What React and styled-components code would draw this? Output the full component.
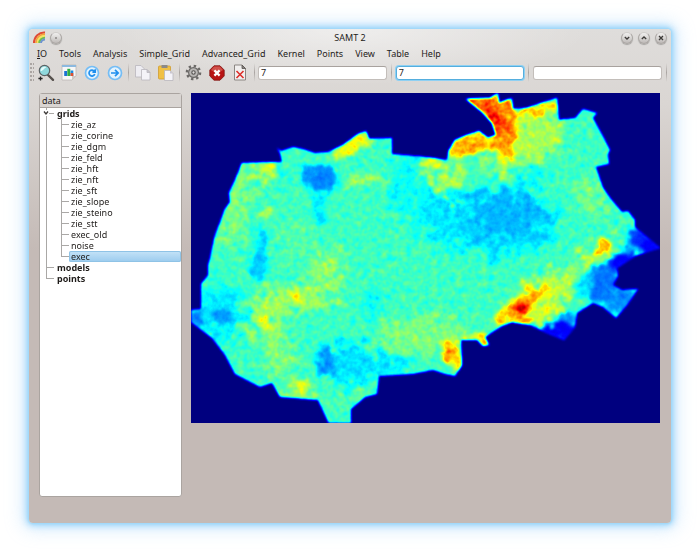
import React, { useState } from "react";
import styled, { createGlobalStyle, css } from "styled-components";

const GlobalStyle = createGlobalStyle`
  * { box-sizing: border-box; }
  body {
    margin: 0;
    background: #fff;
    color: #1f1c1a;
    font: 9px/12px "Noto Sans", "Open Sans", sans-serif;
  }
  button, input { font: inherit; color: inherit; }
`;

const Desktop = styled.div`
  display: flex;
  min-height: 100vh;
  padding: 29px;
`;

const Window = styled.div`
  flex: 1;
  min-width: 0;
  display: flex;
  flex-direction: column;
  border-radius: 4px;
  background:
    radial-gradient(ellipse 240px 56px at 50% 0, rgba(255, 255, 255, 0.5), rgba(255, 255, 255, 0)),
    linear-gradient(#dfdddb 0, #dad6d3 74px, #c4bab6 222px);
  box-shadow:
    0 0 2px 1px #a0d8f8,
    0 0 7px 2px rgba(120, 200, 250, 0.8),
    0 0 18px 6px rgba(150, 205, 250, 0.4);
`;

const TitleBar = styled.header`
  display: grid;
  grid-template-columns: 1fr auto 1fr;
  align-items: center;
  height: 17px;
  padding: 0 4px;
`;

const TitleGroup = styled.div`
  display: flex;
  align-items: center;
  gap: ${(p) => (p.$end ? 5 : 4)}px;
  justify-content: ${(p) => (p.$end ? "flex-end" : "flex-start")};
`;

const Title = styled.h1`
  margin: 0;
  font-size: 9px;
  font-weight: 400;
`;

const RoundButton = styled.button`
  display: grid;
  place-items: center;
  width: 12px;
  height: 12px;
  padding: 0;
  border: 1px solid #aaa6a3;
  border-top-color: #d0cdcb;
  border-radius: 50%;
  background: linear-gradient(#f1f0ef, #bebab8);
  box-shadow: 0 1px 1px rgba(0, 0, 0, 0.25);
`;

const MenuBar = styled.nav`
  display: flex;
  gap: 12px;
  height: 16px;
  padding: 0 8px;
`;

const MenuItem = styled.button`
  padding: 0;
  border: 0;
  background: none;
  line-height: 16px;
  white-space: nowrap;
`;

const ToolBar = styled.div`
  display: flex;
  align-items: center;
  height: 21px;
`;

const Grip = styled.span`
  width: 4px;
  height: 19px;
  margin: 0 0 0 1px;
  background: radial-gradient(circle at 1px 1px, #aaa5a2 1px, transparent 1px) 0 0 / 3px 4px;
`;

const ToolButton = styled.button`
  display: grid;
  place-items: center;
  width: 23px;
  height: 20px;
  padding: 0;
  border: 0;
  background: none;
  svg { display: block; }
`;

const Separator = styled.span`
  flex: none;
  width: 1px;
  height: 19px;
  margin: 0 ${(p) => p.$gap || 2}px;
  background: linear-gradient(transparent, #aaa5a2, transparent);
`;

const Field = styled.input`
  flex: 1;
  min-width: 0;
  height: 14px;
  padding: 0 2px;
  border: 1px solid #c3beba;
  border-top-color: #a8a29e;
  border-radius: 3px;
  background: #fff;
  outline: none;
  ${(p) =>
    p.$active &&
    css`
      border-color: #55aede;
      box-shadow: 0 0 0 1px #8fd0f2;
    `}
`;

const Workspace = styled.main`
  display: grid;
  grid-template-columns: 143px minmax(0, 1fr);
  gap: 9px;
  flex: 1;
  padding: 10px 11px 26px 10px;
`;

const DataPanel = styled.section`
  border: 1px solid #aaa4a0;
  border-radius: 3px;
  background: #fff;
`;

const PanelHeader = styled.h2`
  margin: 0;
  height: 14px;
  padding: 0 2px;
  border-bottom: 1px solid #aaa4a0;
  background: #d9d5d2;
  font-size: 9px;
  font-weight: 400;
  line-height: 13px;
`;

const Tree = styled.ul`
  list-style: none;
  margin: 0;
  padding: 0;
`;

const Branch = styled.li`
  display: grid;
  grid-template-columns: ${(p) => (p.$leaf ? 14 : 15)}px minmax(0, 1fr);
`;

const line = "#aaa8a6";

const Guide = styled.span`
  display: grid;
  place-items: center start;
  padding-left: 3px;
  background:
    linear-gradient(${line}, ${line}) 6px 0 / 1px ${(p) => (p.$last ? "6px" : "100%")} no-repeat,
    linear-gradient(${line}, ${line}) 6px 5px / 8px 1px no-repeat;
  svg { background: #fff; align-self: start; margin-top: 2px; }
`;

const Label = styled.button`
  display: block;
  width: 100%;
  height: 11px;
  padding: 0 2px;
  border: 0;
  border-radius: 2px;
  background: none;
  font-weight: ${(p) => (p.$leaf ? 400 : 700)};
  line-height: 11px;
  text-align: left;
  ${(p) =>
    p.$selected &&
    css`
      background: linear-gradient(#c5e3f7, #9acbee);
      box-shadow: inset 0 0 0 1px #8fc3e6;
    `}
`;

const Canvas = styled.svg`
  display: block;
  width: 100%;
  height: auto;
`;

/* ---------- icons ---------- */

const Rainbow = () => (
  <svg width="13" height="13" viewBox="0 0 13 13" fill="none" strokeWidth="2">
    <path d="M1 12C1 6 6 1 12 1.5" stroke="#df4a35" />
    <path d="M3 12C3 7 7 3 12 3.2" stroke="#f4a13c" />
    <path d="M4.7 12C4.7 8 8 5 12 5" stroke="#f4e45c" />
    <path d="M6.3 12C6.3 9 9 6.7 12 6.7" stroke="#6fbd53" />
    <path d="M8 12C8 10 10 8.5 12 8.5" stroke="#6c93cf" />
  </svg>
);

const Glyph = ({ d }) => (
  <svg width="6" height="6" viewBox="0 0 6 6" fill="none" stroke="#3d3a38" strokeWidth="1.3">
    <path d={d} />
  </svg>
);

const SearchIcon = () => (
  <svg width="18" height="18" viewBox="0 0 18 18">
    <path d="M10.5 10.5L16 15.8" stroke="#55504c" strokeWidth="2.4" strokeLinecap="round" />
    <circle cx="7.5" cy="6.5" r="5.2" fill="#8fd8dc" stroke="#5b6264" strokeWidth="1.2" />
    <path d="M3.6 7C3.6 3.5 6.4 2.2 9.4 3.2C7 4 6.4 7 3.6 7Z" fill="#e4fbfb" />
    <path d="M3.5 12.4V16.6M1.4 14.5H5.6" stroke="#222" strokeWidth="1.3" />
  </svg>
);

const ChartIcon = () => (
  <svg width="16" height="17" viewBox="0 0 16 17">
    <path d="M1 1H15V12L11 16H1Z" fill="#f7f7f7" stroke="#bbb7b4" strokeWidth=".8" />
    <path d="M1 1H15V3H1Z" fill="#8cb9df" />
    <path d="M11 16V12H15Z" fill="#cfcac6" />
    <path d="M3.2 7H6V12H3.2Z" fill="#1a72d4" />
    <path d="M6.3 4.8H9.3V12H6.3Z" fill="#2fae45" />
    <path d="M9.6 6.5H12.3V12H9.6Z" fill="#1a8be0" />
    <path d="M9.6 9H12.3V12H9.6Z" fill="#df5130" />
  </svg>
);

const BlueDisc = ({ children }) => (
  <svg width="16" height="16" viewBox="0 0 16 16" fill="none">
    <circle cx="8" cy="8" r="6.5" fill="#e3f3fe" stroke="#74bdf5" strokeWidth="1.7" />
    <g stroke="#1f8fee" strokeWidth="1.7">{children}</g>
  </svg>
);

const CopyIcon = () => (
  <svg width="18" height="18" viewBox="0 0 18 18" stroke="#b9b6bd" strokeWidth=".8">
    <path d="M1.5 1.5H7L10 4.5V13H1.5Z" fill="#eeedf2" />
    <path d="M7.5 5.5H13L16 8.5V16H7.5Z" fill="#f4f3f8" />
    <path d="M13 5.5V8.5H16Z" fill="#c9c6d0" />
  </svg>
);

const PasteIcon = () => (
  <svg width="18" height="18" viewBox="0 0 18 18">
    <rect x="1.5" y="2" width="12" height="13" rx="1" fill="#f0c044" stroke="#cf9c30" strokeWidth=".8" />
    <path d="M4.5 4V1H10.5V4Z" fill="#8d8a87" />
    <path d="M7.5 6.5H13L16 9.5V16.5H7.5Z" fill="#f4f3f8" stroke="#b9b6bd" strokeWidth=".8" />
    <path d="M13 6.5V9.5H16Z" fill="#c9c6d0" />
  </svg>
);

const GearIcon = () => (
  <svg width="17" height="17" viewBox="0 0 17 17" fill="none">
    <circle cx="8.5" cy="8.5" r="6.6" stroke="#6b6967" strokeWidth="2.4" strokeDasharray="2.4 2.784" />
    <circle cx="8.5" cy="8.5" r="4.9" fill="#b9b7b5" stroke="#6b6967" strokeWidth="1.2" />
    <circle cx="8.5" cy="8.5" r="1.7" fill="#dedcda" stroke="#555351" strokeWidth="1.1" />
  </svg>
);

const StopIcon = () => (
  <svg width="16" height="16" viewBox="0 0 16 16">
    <path d="M5 .8H11L15.2 5V11L11 15.2H5L.8 11V5Z" fill="#b81414" stroke="#7d1512" strokeWidth=".8" />
    <path d="M5.2 1.5H10.8L14 5C11 7.5 5 7.5 2 5Z" fill="#d0504a" />
    <path d="M5.4 5.4L10.6 10.6M10.6 5.4L5.4 10.6" stroke="#fff" strokeWidth="2.2" />
  </svg>
);

const PageCrossIcon = () => (
  <svg width="14" height="17" viewBox="0 0 14 17" fill="none">
    <path d="M1.5 1H9L12.5 4.5V16H1.5Z" fill="#f1efee" stroke="#8b8682" />
    <path d="M9 1V4.5H12.5Z" fill="#8b8682" stroke="#57524e" strokeWidth=".8" />
    <path d="M3.5 7L10.5 14M10.5 7L3.5 14" stroke="#dd2f2a" strokeWidth="1.6" />
  </svg>
);

/* ---------- grid map ---------- */

const outline =
  "210,258 215,235 225,209 230,202 229,193 235,180 242,163 282,162 280,153 277,148 281,151 293,147 303,149 315,153 328,152 343,145 358,134 366,131 369,139 392,138 392,154 425,157 447,160 449,150 455,140 467,135 479,131 488,138 496,135 492,123 482,112 466,99 490,98 498,93 499,103 506,100 512,98 513,109 527,108 544,102 557,98 559,120 575,118 583,109 597,113 593,118 605,140 610,150 608,154 609,164 596,167 603,188 611,199 622,212 628,211 635,220 635,227 660,248 650,251 635,256 617,268 618,276 613,285 622,290 638,289 627,305 616,318 603,307 593,303 577,313 575,327 564,340 547,333 530,325 512,322 502,326 485,337 489,345 483,346 477,340 461,340 462,365 455,376 445,374 433,370 412,374 379,376 377,394 365,397 351,409 351,424 329,424 318,400 295,398 280,397 272,383 260,387 235,374 225,355 212,338 191,322 191,310 201,309 201,284 208,275 208,265";

// [cx, cy, rx, ry, level 0..100, rotation]
const broad = [
  [222, 312, 26, 28, 36],
  [236, 205, 14, 46, 50, 12],
  [256, 172, 20, 10, 54],
  [300, 240, 22, 26, 46],
  [412, 190, 24, 34, 39],
  [448, 218, 26, 26, 35],
  [500, 222, 60, 34, 36],
  [525, 175, 20, 14, 38],
  [508, 213, 38, 24, 31],
  [475, 205, 12, 8, 31],
  [485, 238, 20, 5, 29],
  [445, 178, 18, 16, 55],
  [535, 135, 28, 26, 55],
  [505, 165, 18, 14, 54],
  [590, 196, 14, 20, 51],
  [594, 256, 26, 9, 56, -40],
  [420, 335, 46, 20, 50],
  [540, 300, 44, 20, 57, -32],
  [264, 315, 18, 28, 52],
  [300, 297, 44, 14, 54, -15],
  [330, 270, 16, 20, 52],
  [278, 355, 14, 22, 51],
  [348, 364, 28, 20, 35],
  [385, 365, 22, 10, 35],
  [373, 305, 10, 16, 38],
  [350, 398, 16, 10, 48],
  [300, 392, 22, 8, 54],
];

const spots = [
  [222, 316, 8, 8, 28],
  [197, 318, 9, 8, 26],
  [262, 240, 6, 16, 35],
  [259, 265, 8, 18, 33],
  [322, 178, 15, 14, 26, 30],
  [308, 173, 8, 7, 27],
  [318, 204, 6, 10, 36],
  [320, 220, 4, 10, 35],
  [283, 174, 4, 4, 34],
  [269, 168, 7, 8, 58],
  [266, 212, 7, 4, 60],
  [365, 180, 20, 5, 56],
  [355, 144, 26, 8, 62, -28],
  [430, 162, 12, 6, 62],
  [490, 108, 30, 14, 77, 20],
  [502, 128, 15, 26, 75],
  [508, 150, 10, 10, 71],
  [470, 144, 26, 10, 71, -20],
  [540, 109, 22, 7, 68, -15],
  [603, 247, 8, 6, 74, -35],
  [640, 238, 12, 12, 17, 40],
  [654, 248, 14, 8, 12, 20],
  [620, 262, 18, 8, 12, -35],
  [603, 284, 15, 20, 24],
  [620, 298, 18, 14, 27, -30],
  [583, 287, 8, 12, 36],
  [558, 331, 20, 9, 12, -8],
  [566, 317, 12, 5, 27],
  [550, 313, 9, 6, 60],
  [522, 305, 26, 9, 71, -38],
  [503, 317, 11, 6, 69, -35],
  [532, 294, 7, 5, 71],
  [546, 289, 7, 4, 73],
  [521, 321, 9, 4, 76],
  [449, 350, 8, 12, 70],
  [457, 360, 5, 14, 67],
  [472, 338, 18, 4, 65],
  [484, 342, 5, 6, 71],
  [265, 322, 6, 4, 64],
  [297, 297, 6, 4, 65],
  [327, 264, 5, 5, 58],
  [303, 386, 7, 5, 62],
  [324, 352, 5, 8, 27],
  [327, 364, 7, 9, 27],
];

const peaks = [
  [494, 117, 5, 17, 86, -35],
  [474, 101, 7, 2, 82],
  [523, 308, 8, 4, 98, -15],
  [450, 349, 4, 4, 76],
];

const Blobs = ({ items, blur }) => (
  <g filter={`url(#${blur})`}>
    {items.map(([x, y, rx, ry, v, r = 0], i) => (
      <ellipse
        key={i}
        rx={rx}
        ry={ry}
        fill={`rgb(${v}%,${v}%,${v}%)`}
        transform={`translate(${x} ${y}) rotate(${r})`}
      />
    ))}
  </g>
);

const region = { x: 181, y: 83, width: 489, height: 350, filterUnits: "userSpaceOnUse" };
const canvasRegion = { x: 191, y: 93, width: 469, height: 330, filterUnits: "userSpaceOnUse" };

const RoughBlur = ({ id, blur, scale }) => (
  <filter id={id} {...region} colorInterpolationFilters="sRGB">
    <feGaussianBlur in="SourceGraphic" stdDeviation={blur} result="blurred" />
    <feTurbulence type="fractalNoise" baseFrequency="0.09" numOctaves="3" seed="12" result="warp" />
    <feDisplacementMap in="blurred" in2="warp" scale={scale} xChannelSelector="R" yChannelSelector="G" />
  </filter>
);

const GridMap = () => (
  <Canvas viewBox="191 93 469 330" role="img" aria-label="exec">
    <defs>
      <clipPath id="land"><polygon points={outline} /></clipPath>
      <RoughBlur id="soft" blur={5} scale={46} />
      <RoughBlur id="fine" blur={2} scale={14} />
      <RoughBlur id="sharp" blur={2} scale={6} />
      <filter id="jet" {...canvasRegion} colorInterpolationFilters="sRGB">
        <feGaussianBlur in="SourceGraphic" stdDeviation="0.9" result="value" />
        <feTurbulence type="fractalNoise" baseFrequency="0.16" numOctaves="2" seed="7" />
        <feColorMatrix values=".6 .4 0 0 0  .6 .4 0 0 0  .6 .4 0 0 0  0 0 0 0 1" result="noise" />
        <feComposite in="value" in2="noise" operator="arithmetic" k1="0.46" k2="0.76" k3="0" k4="0" />
        <feColorMatrix values="1 0 0 0 0  0 1 0 0 0  0 0 1 0 0  0 0 0 0 1" />
        <feComponentTransfer>
          <feFuncR type="table" tableValues="0 0 0 0 .5 1 1 1 .5" />
          <feFuncG type="table" tableValues="0 0 .5 1 1 1 .5 0 0" />
          <feFuncB type="table" tableValues=".5 1 1 1 .5 0 0 0 0" />
        </feComponentTransfer>
      </filter>
    </defs>
    <g filter="url(#jet)">
      <rect x="181" y="83" width="489" height="350" fill="#000" />
      <g clipPath="url(#land)">
        <rect x="191" y="93" width="469" height="330" fill="rgb(44%,44%,44%)" />
        <Blobs items={broad} blur="soft" />
        <Blobs items={spots} blur="fine" />
        <Blobs items={peaks} blur="sharp" />
      </g>
    </g>
  </Canvas>
);

/* ---------- page ---------- */

const menus = ["IO", "Tools", "Analysis", "Simple_Grid", "Advanced_Grid", "Kernel", "Points", "View", "Table", "Help"];
const grids = [
  "zie_az", "zie_corine", "zie_dgm", "zie_feld", "zie_hft", "zie_nft", "zie_sft",
  "zie_slope", "zie_steino", "zie_stt", "exec_old", "noise", "exec",
];

export default function App() {
  const [selected, setSelected] = useState("exec");
  return (
    <Desktop>
      <GlobalStyle />
      <Window>
        <TitleBar>
          <TitleGroup>
            <Rainbow />
            <RoundButton aria-label="Window menu"><Glyph d="M2.5 3H3.5" /></RoundButton>
          </TitleGroup>
          <Title>SAMT 2</Title>
          <TitleGroup $end>
            <RoundButton aria-label="Minimize"><Glyph d="M.8 2L3 4L5.2 2" /></RoundButton>
            <RoundButton aria-label="Maximize"><Glyph d="M.8 4L3 2L5.2 4" /></RoundButton>
            <RoundButton aria-label="Close"><Glyph d="M1 1L5 5M5 1L1 5" /></RoundButton>
          </TitleGroup>
        </TitleBar>
        <MenuBar>
          {menus.map((m) => (
            <MenuItem key={m}>{m === "IO" ? <><u>I</u>O</> : m}</MenuItem>
          ))}
        </MenuBar>
        <ToolBar>
          <Grip />
          <ToolButton aria-label="Zoom"><SearchIcon /></ToolButton>
          <ToolButton aria-label="Chart"><ChartIcon /></ToolButton>
          <ToolButton aria-label="Reload">
            <BlueDisc><path d="M10.4 6.2A3 3 0 1 0 10.8 9.2M11.2 4.2V7.2H8.4" /></BlueDisc>
          </ToolButton>
          <ToolButton aria-label="Forward">
            <BlueDisc><path d="M4 8H11M8 4.8L11.2 8L8 11.2" /></BlueDisc>
          </ToolButton>
          <Separator />
          <ToolButton aria-label="Copy"><CopyIcon /></ToolButton>
          <ToolButton aria-label="Paste"><PasteIcon /></ToolButton>
          <Separator />
          <ToolButton aria-label="Settings"><GearIcon /></ToolButton>
          <ToolButton aria-label="Stop"><StopIcon /></ToolButton>
          <ToolButton aria-label="Delete page"><PageCrossIcon /></ToolButton>
          <Separator $gap={3} />
          <Field aria-label="First value" defaultValue="7" />
          <Separator $gap={4} />
          <Field aria-label="Second value" defaultValue="7" $active autoFocus />
          <Separator $gap={4} />
          <Field aria-label="Third value" />
          <Separator $gap={4} />
        </ToolBar>
        <Workspace>
          <DataPanel>
            <PanelHeader>data</PanelHeader>
            <Tree>
              <Branch>
                <Guide>
                  <Glyph d="M1 1.5L3 4L5 1.5" />
                </Guide>
                <div>
                  <Label>grids</Label>
                  <Tree>
                    {grids.map((g, i) => (
                      <Branch key={g} $leaf>
                        <Guide $last={i === grids.length - 1} />
                        <Label $leaf $selected={g === selected} onClick={() => setSelected(g)}>{g}</Label>
                      </Branch>
                    ))}
                  </Tree>
                </div>
              </Branch>
              <Branch><Guide /><Label>models</Label></Branch>
              <Branch><Guide $last /><Label>points</Label></Branch>
            </Tree>
          </DataPanel>
          <GridMap />
        </Workspace>
      </Window>
    </Desktop>
  );
}
